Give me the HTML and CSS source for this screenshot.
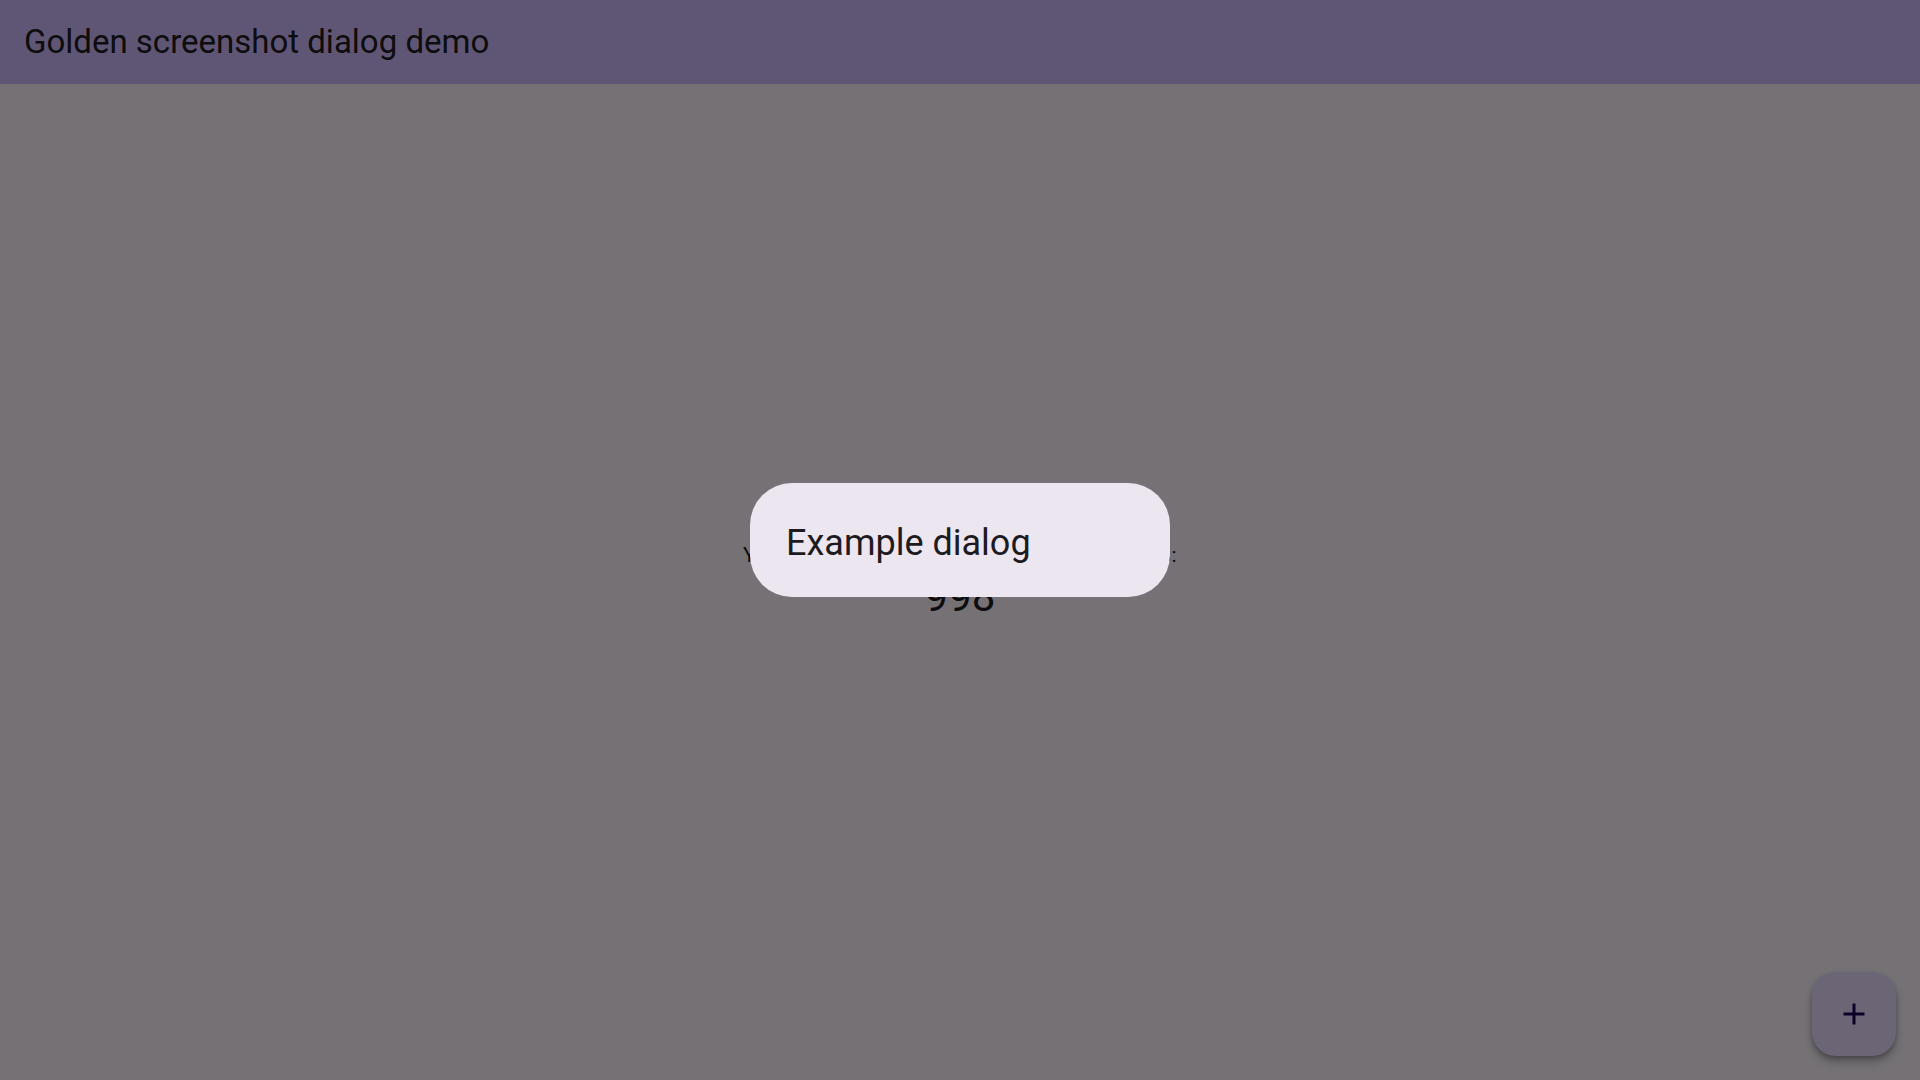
FILE: index.html
```html
<!DOCTYPE html>
<html lang="en">
<head>
<meta charset="utf-8">
<title>Golden screenshot dialog demo</title>
<link rel="stylesheet" href="styles.css">
</head>
<body>
<div class="app">
  <header class="appbar">
    <h1 class="appbar-title">Golden screenshot dialog demo</h1>
  </header>
  <main class="content">
    <div class="counter">
      <p class="counter-label">You have pushed the button this many times:</p>
      <p class="counter-value">998</p>
    </div>
  </main>
  <button class="fab" aria-label="Increment">
    <svg class="fab-icon" viewBox="0 0 24 24" width="36" height="36"><path d="M19 13h-6v6h-2v-6H5v-2h6V5h2v6h6v2z"/></svg>
  </button>
</div>
<div class="barrier">
  <div class="dialog" role="dialog">
    <h2 class="dialog-title">Example dialog</h2>
  </div>
</div>
</body>
</html>
```

FILE: styles.css
```css
html, body {
  margin: 0;
  padding: 0;
  width: 1920px;
  height: 1080px;
  overflow: hidden;
}
body {
  font-family: Roboto, "Noto Sans", sans-serif;
  color: #1D1B20;
  background: #FEF7FF;
}
.app {
  display: flex;
  flex-direction: column;
  height: 1080px;
  position: relative;
}
.appbar {
  height: 84px;
  flex: 0 0 84px;
  background: #D0BCFF;
  display: flex;
  align-items: center;
  padding: 0 24px;
}
.appbar-title {
  margin: 0;
  font-size: 33px;
  font-weight: 400;
  line-height: 42px;
  color: #1D1B20;
}
.content {
  flex: 1;
  display: flex;
  align-items: center;
  justify-content: center;
}
.counter {
  display: flex;
  flex-direction: column;
  align-items: center;
}
.counter-label {
  margin: 0;
  font-size: 21px;
  line-height: 30px;
  letter-spacing: 0.375px;
}
.counter-value {
  margin: 0;
  font-size: 42px;
  line-height: 54px;
}
.fab {
  position: absolute;
  right: 24px;
  bottom: 24px;
  width: 84px;
  height: 84px;
  border: none;
  border-radius: 24px;
  background: #EADDFF;
  display: flex;
  align-items: center;
  justify-content: center;
  padding: 0;
  box-shadow: 0 6px 9px rgba(0,0,0,0.25), 0 2px 4px rgba(0,0,0,0.2);
}
.fab-icon {
  fill: #21005D;
}
.barrier {
  position: fixed;
  inset: 0;
  background: rgba(0,0,0,0.54);
  display: flex;
  align-items: center;
  justify-content: center;
}
.dialog {
  width: 420px;
  box-sizing: border-box;
  padding: 39px 36px 33px;
  background: #ECE6F0;
  border-radius: 42px;
}
.dialog-title {
  margin: 0;
  font-size: 36px;
  font-weight: 400;
  line-height: 42px;
  color: #1D1B20;
}
```
